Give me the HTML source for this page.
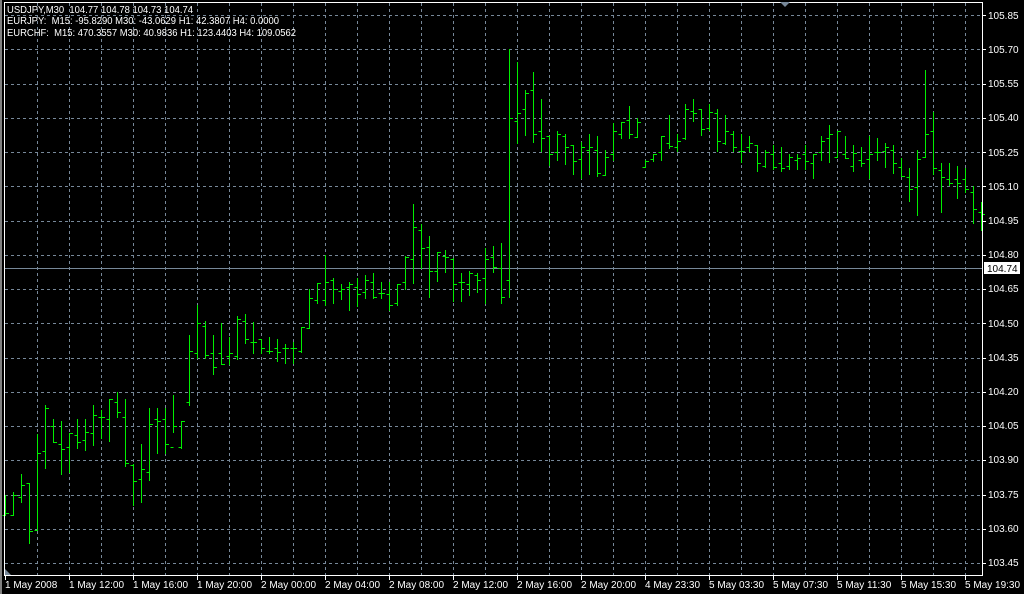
<!DOCTYPE html>
<html><head><meta charset="utf-8"><style>
html,body{margin:0;padding:0;background:#000;width:1024px;height:594px;overflow:hidden}
svg{position:absolute;left:0;top:0}
text{font-family:"Liberation Sans",sans-serif;font-size:10px;fill:#fff}
</style></head><body>
<svg id="s" width="1024" height="594" xmlns="http://www.w3.org/2000/svg">
<rect x="0" y="0" width="1024" height="594" fill="#000"/>
<rect x="0" y="0" width="2" height="594" fill="#808080"/>
<g id="grid" stroke="#778899" stroke-width="1" stroke-dasharray="3,3"></g>
<line x1="4" y1="268.5" x2="983" y2="268.5" stroke="#778899"/>
<g id="bars" stroke="#00ee00" stroke-width="1"></g>
<g stroke="#fff" stroke-width="1" fill="none">
<rect x="4.5" y="2.5" width="978" height="573"/>
</g>
<g id="ticks" stroke="#fff"></g>
<polygon points="780,2 790,2 785,7" fill="#778899"/>
<polygon points="5,569 5,575 11,575" fill="#778899"/>
<rect x="984" y="262" width="36" height="12" fill="#fff"/>
<text x="987" y="272" style="fill:#000">104.74</text>
<text x="7" y="13" textLength="186" lengthAdjust="spacingAndGlyphs">USDJPY,M30&#160;&#160;104.77 104.78 104.73 104.74</text>
<text x="7" y="24" textLength="272" lengthAdjust="spacingAndGlyphs">EURJPY:&#160;&#160;M15: -95.8290 M30: -43.0629 H1: 42.3807 H4: 0.0000</text>
<text x="7" y="36" textLength="289" lengthAdjust="spacingAndGlyphs">EURCHF:&#160;&#160;M15: 470.3557 M30: 40.9836 H1: 123.4403 H4: 109.0562</text>
<text x="988" y="19">105.85</text>
<text x="988" y="53">105.70</text>
<text x="988" y="87">105.55</text>
<text x="988" y="121">105.40</text>
<text x="988" y="156">105.25</text>
<text x="988" y="190">105.10</text>
<text x="988" y="224">104.95</text>
<text x="988" y="258">104.80</text>
<text x="988" y="292">104.65</text>
<text x="988" y="327">104.50</text>
<text x="988" y="361">104.35</text>
<text x="988" y="395">104.20</text>
<text x="988" y="429">104.05</text>
<text x="988" y="463">103.90</text>
<text x="988" y="498">103.75</text>
<text x="988" y="532">103.60</text>
<text x="988" y="566">103.45</text>
<text x="5" y="588">1 May 2008</text>
<text x="69" y="588">1 May 12:00</text>
<text x="133" y="588">1 May 16:00</text>
<text x="197" y="588">1 May 20:00</text>
<text x="261" y="588">2 May 00:00</text>
<text x="325" y="588">2 May 04:00</text>
<text x="389" y="588">2 May 08:00</text>
<text x="453" y="588">2 May 12:00</text>
<text x="517" y="588">2 May 16:00</text>
<text x="581" y="588">2 May 20:00</text>
<text x="645" y="588">4 May 23:30</text>
<text x="709" y="588">5 May 03:30</text>
<text x="773" y="588">5 May 07:30</text>
<text x="837" y="588">5 May 11:30</text>
<text x="901" y="588">5 May 15:30</text>
<text x="965" y="588">5 May 19:30</text>
</svg>
<script>
var NS="http://www.w3.org/2000/svg";
function L(g,x1,y1,x2,y2){var l=document.createElementNS(NS,"line");l.setAttribute("x1",x1);l.setAttribute("y1",y1);l.setAttribute("x2",x2);l.setAttribute("y2",y2);g.appendChild(l);}
var grid=document.getElementById("grid"),ticks=document.getElementById("ticks"),bars=document.getElementById("bars");
for(var i=0;i<17;i++){var y=Math.round(15+i*34.25)+0.5;L(grid,5,y,982,y);L(ticks,982,y,986,y);}
for(var x=37;x<982;x+=32){L(grid,x+0.5,3,x+0.5,575);}
for(var x=5;x<982;x+=64){L(ticks,x+0.5,576,x+0.5,580);}
var d=[[495,515,515,513],[492,515,515,495],[474,502,497,485],[483,543,483,531],[434,530,530,453],[405,468,451,408],[419,442,426,442],[421,474,444,449],[433,472,447,433],[419,448,435,442],[419,450,440,432],[405,445,433,415],[410,438,417,417],[399,441,419,399],[392,417,402,412],[399,466,417,463],[464,505,465,481],[444,502,479,469],[408,480,472,424],[408,453,419,421],[408,453,419,444],[395,432,447,426],[421,448,447,421],[335,405,402,351],[305,358,353,323],[321,358,326,355],[335,374,353,367],[323,364,353,364],[337,364,356,353],[316,359,356,319],[314,343,321,339],[322,353,342,342],[339,353,339,348],[337,353,351,351],[339,361,348,352],[344,363,348,348],[342,363,348,348],[327,352,351,327],[289,328,328,298],[283,303,300,283],
[255,305,300,282],[278,303,280,289],[284,299,291,289],[282,310,287,284],[278,306,287,294],[275,298,292,280],[273,298,282,297],[282,298,293,293],[282,310,294,305],[284,305,303,284],[256,289,282,257],[204,283,259,227],[224,268,230,248],[236,297,247,271],[252,281,271,252],[250,272,256,257],[258,301,259,284],[273,301,282,282],[271,295,284,273],[273,292,275,280],[248,303,278,259],[246,272,257,267],[243,303,268,297],[49,297,280,118],[62,143,121,113],[90,135,109,93],[72,142,90,134],[99,151,131,138],[136,165,136,154],[131,160,152,134],[134,164,136,147],[145,174,145,161],[142,178,159,147],[134,174,150,147],[136,176,150,173],[150,175,175,157],[123,160,154,131],[122,138,134,122],[106,138,120,134],[118,137,137,122],
[160,167,167,161],[154,161,159,154],[136,160,152,136],[115,148,143,146],[134,151,147,141],[104,139,138,109],[99,121,111,113],[109,135,109,129],[104,130,128,112],[109,151,113,141],[115,144,143,131],[131,151,134,147],[134,162,151,151],[136,151,147,143],[145,171,145,163],[150,167,166,152],[145,169,154,167],[147,171,163,168],[154,169,166,157],[154,169,160,158],[145,169,154,161],[154,178,163,154],[136,160,152,141],[125,162,138,134],[131,157,157,131],[136,158,154,158],[145,171,166,153],[147,166,160,163],[136,178,159,154],[138,160,152,152],[143,167,151,147],[145,173,150,163],[158,176,167,176],[168,201,177,189],[150,215,187,159],[70,157,157,134],[112,174,131,168],[163,212,170,177],[163,185,179,183],[166,198,179,183],[168,192,179,189],[186,223,192,209],[202,230,212,214]];
for(var k=0;k<d.length;k++){var x=5+8*k+0.5,b=d[k];L(bars,x,b[0],x,b[1]+1);L(bars,x-3,b[2]+0.5,x,b[2]+0.5);L(bars,x,b[3]+0.5,x+3.5,b[3]+0.5);}
</script>
</body></html>
